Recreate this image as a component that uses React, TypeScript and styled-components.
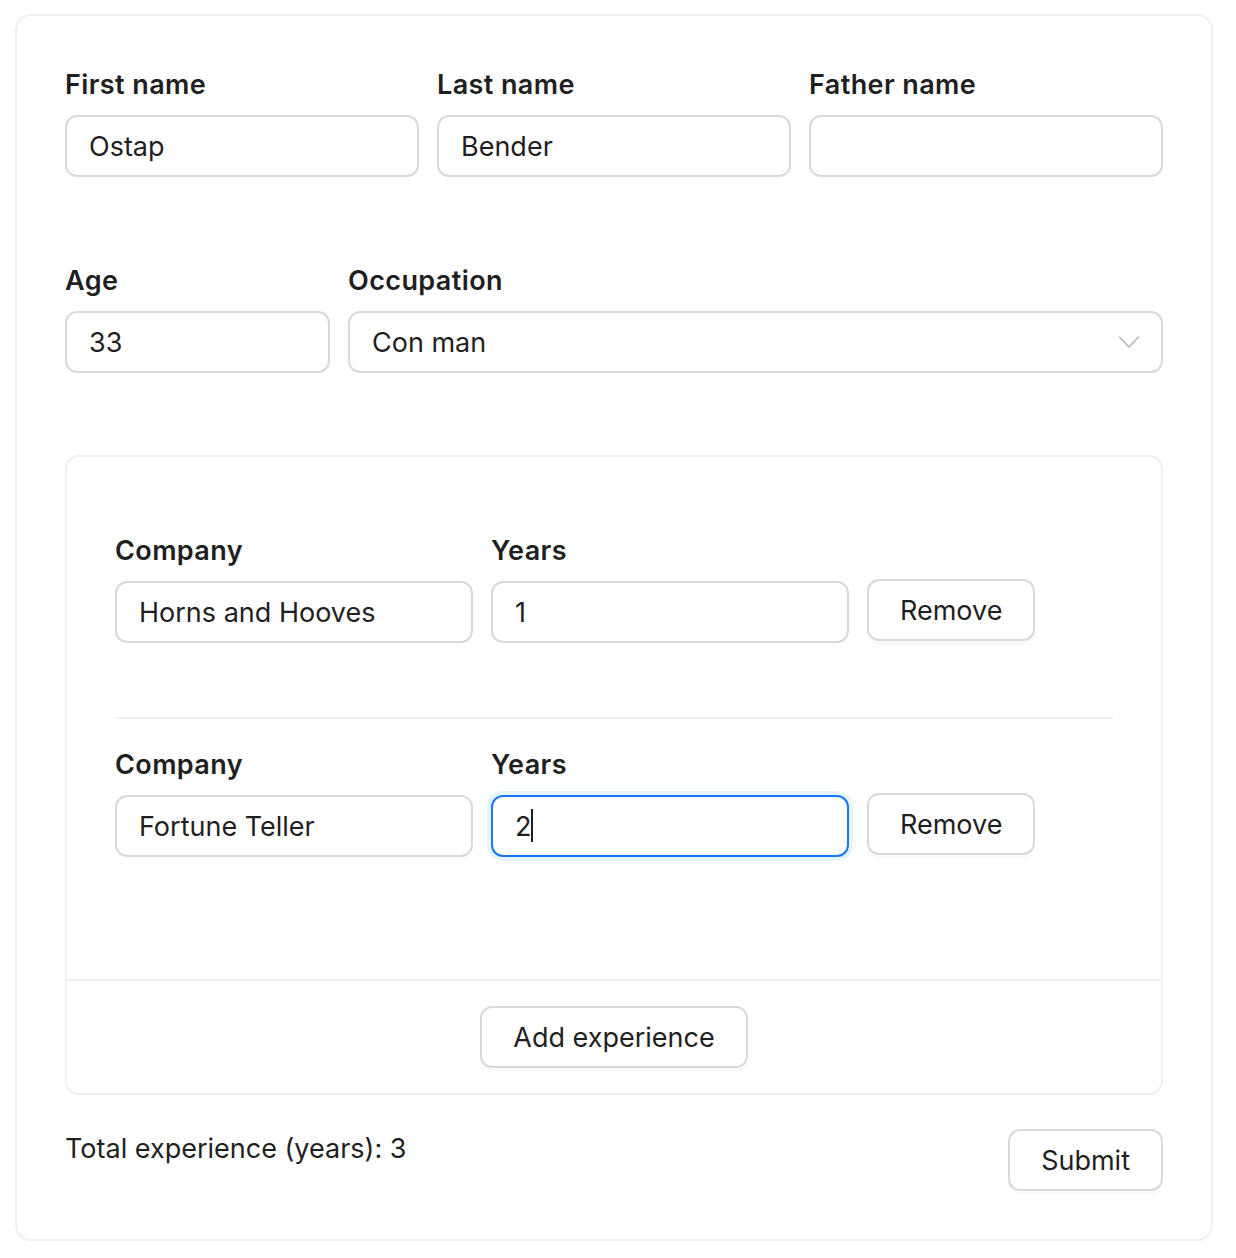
import styled, { createGlobalStyle } from "styled-components";

const GlobalStyle = createGlobalStyle`
  * { box-sizing: border-box; }
  body {
    margin: 0;
    background: #fff;
    font-family: Inter, "Liberation Sans", sans-serif;
    color: #1f1f1f;
  }
`;

const Card = styled.form`
  width: 1198px;
  margin: 14px 0 0 15px;
  border: 2px solid #efefef;
  border-radius: 16px;
  padding: 49px 48px 48px 48px;
  box-shadow: 0 2px 2px rgba(0, 0, 0, 0.02);
`;

const Row = styled.div<{ $mb?: number }>`
  display: flex;
  gap: 18px;
  margin-bottom: ${(p) => p.$mb ?? 0}px;
`;

const Field = styled.div<{ $w?: number }>`
  display: flex;
  flex-direction: column;
  width: ${(p) => (p.$w ? `${p.$w}px` : "auto")};
  flex: ${(p) => (p.$w ? "none" : "1")};
`;

const Label = styled.label`
  font-size: 27px;
  line-height: 40px;
  font-weight: 600;
  margin-bottom: 10px;
  letter-spacing: 0.4px;
`;

const InputWrap = styled.div`
  position: relative;
`;

const Input = styled.input<{ $focused?: boolean }>`
  display: block;
  height: 62px;
  width: 100%;
  border: 2px solid ${(p) => (p.$focused ? "#1677ff" : "#d9d9d9")};
  border-radius: 12px;
  padding: 0 22px;
  font: inherit;
  font-size: 27px;
  color: #1f1f1f;
  background: #fff;
  outline: none;
  box-shadow: ${(p) => (p.$focused ? "0 0 0 4px rgba(5, 145, 255, 0.1)" : "none")};
  caret-color: transparent;
`;

/* text cursor drawn over the focused field */
const Caret = styled.span`
  position: absolute;
  left: 40px;
  top: 14px;
  width: 2px;
  height: 33px;
  background: #1f1f1f;
`;

const SelectBox = styled.div`
  height: 62px;
  border: 2px solid #d9d9d9;
  border-radius: 12px;
  padding: 0 22px;
  display: flex;
  align-items: center;
  justify-content: space-between;
  font-size: 27px;
  svg {
    margin-right: -1px;
  }
`;

const ExpBox = styled.div`
  border: 2px solid #efefef;
  border-radius: 14px;
  margin-bottom: 34px;
`;

const ExpBody = styled.div`
  padding: 74px 48px 122px 48px;
`;

const Entry = styled.div`
  display: flex;
  gap: 18px;
  align-items: flex-end;
`;

const Divider = styled.hr`
  border: none;
  border-top: 2px solid #efefef;
  margin: 74px 0 26px 0;
`;

const Button = styled.button<{ $lift?: boolean }>`
  height: 62px;
  padding: 0 31px;
  border: 2px solid #d9d9d9;
  border-radius: 12px;
  background: #fff;
  font: inherit;
  font-size: 27px;
  color: #1f1f1f;
  box-shadow: 0 4px 0 rgba(0, 0, 0, 0.02);
  cursor: pointer;
  margin-bottom: ${(p) => (p.$lift ? "2px" : "0")};
`;

const ExpFooter = styled.div`
  border-top: 2px solid #efefef;
  padding: 25px 0 25px;
  display: flex;
  justify-content: center;
`;

const Bottom = styled.div`
  display: flex;
  justify-content: space-between;
  align-items: flex-start;
`;

const Total = styled.div`
  font-size: 27px;
  line-height: 40px;
`;

const Chevron = () => (
  <svg width="22" height="14" viewBox="0 0 22 14" fill="none">
    <path d="M1 1.5 L11 12 L21 1.5" stroke="#bdbdbd" strokeWidth="1.8" />
  </svg>
);

const experiences = [
  { company: "Horns and Hooves", years: "1" },
  { company: "Fortune Teller", years: "2" },
];

export default function App() {
  return (
    <>
      <GlobalStyle />
      <Card onSubmit={(e) => e.preventDefault()}>
        <Row $mb={84}>
          <Field>
            <Label>First name</Label>
            <Input defaultValue="Ostap" />
          </Field>
          <Field>
            <Label>Last name</Label>
            <Input defaultValue="Bender" />
          </Field>
          <Field>
            <Label>Father name</Label>
            <Input defaultValue="" />
          </Field>
        </Row>
        <Row $mb={82}>
          <Field $w={265}>
            <Label>Age</Label>
            <Input defaultValue="33" />
          </Field>
          <Field>
            <Label>Occupation</Label>
            <SelectBox>
              <span>Con man</span>
              <Chevron />
            </SelectBox>
          </Field>
        </Row>
        <ExpBox>
          <ExpBody>
            {experiences.map((exp, i) => (
              <div key={i}>
                {i > 0 && <Divider />}
                <Entry>
                  <Field $w={358}>
                    <Label>Company</Label>
                    <Input defaultValue={exp.company} />
                  </Field>
                  <Field $w={358}>
                    <Label>Years</Label>
                    <InputWrap>
                      <Input defaultValue={exp.years} $focused={i === 1} />
                      {i === 1 && <Caret />}
                    </InputWrap>
                  </Field>
                  <Button type="button" $lift>
                    Remove
                  </Button>
                </Entry>
              </div>
            ))}
          </ExpBody>
          <ExpFooter>
            <Button type="button">Add experience</Button>
          </ExpFooter>
        </ExpBox>
        <Bottom>
          <Total>Total experience (years): 3</Total>
          <Button type="submit">Submit</Button>
        </Bottom>
      </Card>
    </>
  );
}
